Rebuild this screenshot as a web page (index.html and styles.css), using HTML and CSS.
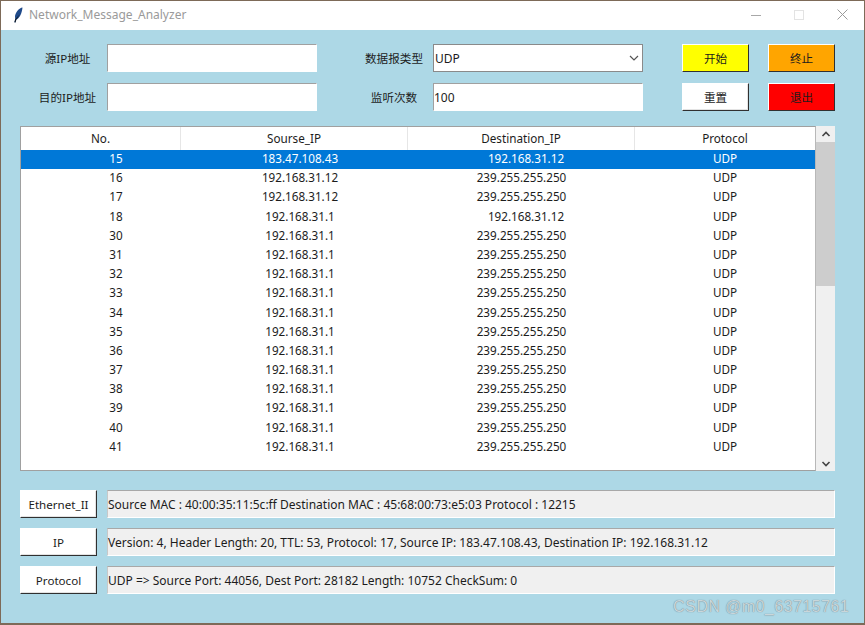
FILE: index.html
```html
<!DOCTYPE html>
<html lang="zh">
<head>
<meta charset="utf-8">
<title>Network_Message_Analyzer</title>
<link rel="stylesheet" href="styles.css">
</head>
<body>
<div class="window">
  <header class="titlebar">
    <svg class="feather" width="14" height="16" viewBox="0 0 14 16"><path d="M10.5 0.5C7 1 4.2 4.5 3 9L3.2 12.3L2.4 15.2L3.4 15.5L4.4 12.6C7.5 11.5 10 6 10.5 0.5Z" fill="#1f4a8a"/><path d="M3.2 12.3L2.4 15.2L3.4 15.5L4.4 12.6L8 7Z" fill="#101820"/></svg>
    <span class="title">Network_Message_Analyzer</span>
    <div class="winctl">
      <svg width="10" height="10" viewBox="0 0 10 10"><path d="M0 5.5H10" stroke="#a8a8a8" fill="none"/></svg>
      <svg width="10" height="10" viewBox="0 0 10 10"><rect x=".5" y=".5" width="9" height="9" stroke="#e3e3e3" fill="none"/></svg>
      <svg width="11" height="11" viewBox="0 0 11 11"><path d="M.5.5L10.5 10.5M10.5.5L.5 10.5" stroke="#9a9a9a" fill="none"/></svg>
    </div>
  </header>
  <main class="content">
    <section class="form">
      <label class="lbl">源IP地址</label>
      <div class="entry"></div>
      <label class="lbl lbl-r">数据报类型</label>
      <div class="combo"><span>UDP</span><svg width="10" height="6" viewBox="0 0 10 6"><path d="M1 1L5 5L9 1" stroke="#555" stroke-width="1.2" fill="none"/></svg></div>
      <button class="btn yellow">开始</button>
      <button class="btn orange">终止</button>
      <label class="lbl">目的IP地址</label>
      <div class="entry"></div>
      <label class="lbl lbl-r">监听次数</label>
      <div class="entry entry-text">100</div>
      <button class="btn">重置</button>
      <button class="btn red">退出</button>
    </section>

    <section class="table-wrap">
      <div class="table">
        <div class="row head"><div>No.</div><div>Sourse_IP</div><div>Destination_IP</div><div>Protocol</div></div>
        <div class="row selected"><div class="no">15</div><div class="src">183.47.108.43</div><div class="short">192.168.31.12</div><div>UDP</div></div>
        <div class="row"><div class="no">16</div><div class="src">192.168.31.12</div><div>239.255.255.250</div><div>UDP</div></div>
        <div class="row"><div class="no">17</div><div class="src">192.168.31.12</div><div>239.255.255.250</div><div>UDP</div></div>
        <div class="row"><div class="no">18</div><div class="src">192.168.31.1</div><div class="short">192.168.31.12</div><div>UDP</div></div>
        <div class="row"><div class="no">30</div><div class="src">192.168.31.1</div><div>239.255.255.250</div><div>UDP</div></div>
        <div class="row"><div class="no">31</div><div class="src">192.168.31.1</div><div>239.255.255.250</div><div>UDP</div></div>
        <div class="row"><div class="no">32</div><div class="src">192.168.31.1</div><div>239.255.255.250</div><div>UDP</div></div>
        <div class="row"><div class="no">33</div><div class="src">192.168.31.1</div><div>239.255.255.250</div><div>UDP</div></div>
        <div class="row"><div class="no">34</div><div class="src">192.168.31.1</div><div>239.255.255.250</div><div>UDP</div></div>
        <div class="row"><div class="no">35</div><div class="src">192.168.31.1</div><div>239.255.255.250</div><div>UDP</div></div>
        <div class="row"><div class="no">36</div><div class="src">192.168.31.1</div><div>239.255.255.250</div><div>UDP</div></div>
        <div class="row"><div class="no">37</div><div class="src">192.168.31.1</div><div>239.255.255.250</div><div>UDP</div></div>
        <div class="row"><div class="no">38</div><div class="src">192.168.31.1</div><div>239.255.255.250</div><div>UDP</div></div>
        <div class="row"><div class="no">39</div><div class="src">192.168.31.1</div><div>239.255.255.250</div><div>UDP</div></div>
        <div class="row"><div class="no">40</div><div class="src">192.168.31.1</div><div>239.255.255.250</div><div>UDP</div></div>
        <div class="row"><div class="no">41</div><div class="src">192.168.31.1</div><div>239.255.255.250</div><div>UDP</div></div>
      </div>
      <div class="scrollbar">
        <svg width="10" height="6" viewBox="0 0 10 6"><path d="M1.5 5L5 1.5L8.5 5" stroke="#444" stroke-width="1.6" fill="none"/></svg>
        <div class="track"><div class="thumb"></div></div>
        <svg width="10" height="6" viewBox="0 0 10 6"><path d="M1.5 1L5 4.5L8.5 1" stroke="#444" stroke-width="1.6" fill="none"/></svg>
      </div>
    </section>

    <section class="details">
      <button class="btn">Ethernet_II</button>
      <div class="field">Source MAC : 40:00:35:11:5c:ff Destination MAC : 45:68:00:73:e5:03 Protocol : 12215</div>
      <button class="btn">IP</button>
      <div class="field">Version: 4, Header Length: 20, TTL: 53, Protocol: 17, Source IP: 183.47.108.43, Destination IP: 192.168.31.12</div>
      <button class="btn">Protocol</button>
      <div class="field">UDP =&gt; Source Port: 44056, Dest Port: 28182 Length: 10752 CheckSum: 0</div>
    </section>
    <div class="watermark">CSDN @m0_63715761</div>
  </main>
</div>
</body>
</html>
```
FILE: styles.css
```css
* { box-sizing: border-box; }
html, body { margin: 0; height: 100%; }
body {
  background: #7d6a58;
  font-family: "Noto Sans", "Noto Sans CJK SC", sans-serif;
  font-size: 12px;
  color: #1c1c1c;
  padding: 1px 1px 2px 1px;
}
.window { height: 622px; display: flex; flex-direction: column; background: #add8e6; }
.titlebar {
  height: 29px;
  flex: none;
  background: #fff;
  display: flex;
  align-items: center;
  padding: 0 0 2px 11px;
}
.feather { flex: none; }
.title { margin-left: 3px; color: #9a9a9a; font-size: 12px; }
.winctl { margin-left: auto; display: flex; align-items: center; gap: 33px; padding-right: 16px; }
.content { position: relative; flex: 1; padding: 14px 29px 0 19px; }
.form {
  display: grid;
  grid-template-columns: 87px 210px 116px 210px 106px 86px;
  grid-template-rows: 28px 28px;
  row-gap: 11px;
  align-items: stretch;
}
.lbl { display: flex; align-items: center; justify-content: center; padding-left: 8px; font-size: 11.6px; }
.lbl-r { padding-left: 38px; }
.entry, .combo {
  background: #fff;
  border: 1px solid #fff;
  border-top: 1px solid #a0a0a0;
  border-left: 1px solid #a0a0a0;
}
.entry-text { display: flex; align-items: center; padding-left: 0; }
.combo {
  display: flex;
  align-items: center;
  justify-content: space-between;
  padding: 0 3px 0 1px;
  border: 1px solid #8a8a8a;
}
.btn {
  font: inherit;
  font-size: 11.6px;
  color: #1c1c1c;
  background: #fff;
  border: 1px solid #fff;
  border-right-color: #303030;
  border-bottom-color: #303030;
  padding: 0;
  box-shadow: inset -1px -1px 0 #e3e3e3;
}
.form .btn:nth-of-type(odd) { margin-left: 39px; width: 67px; }
.form .btn:nth-of-type(even) { margin-left: 19px; width: 67px; }
.yellow { background: #ffff00; box-shadow: none; }
.orange { background: #ffa500; box-shadow: none; }
.red { background: #ff0000; box-shadow: none; }
.table-wrap { margin-top: 15px; display: flex; height: 345px; }
.table {
  width: 796px;
  background: #fff;
  border: 1px solid #a0a0a0;
  border-right-color: #b8b8b8;
  font-size: 11.7px;
}
.row {
  display: grid;
  grid-template-columns: 160px 227px 227px 180px;
  height: 19.2px;
  line-height: 17.6px;
  text-align: center;
}
.row.head { height: 23px; line-height: 23px; }
.row.head > div { border-right: 1px solid #e6e6e6; }
.row.head > div:last-child { border-right: 0; }
.row.selected { background: #0078d7; color: #fff; }
.no { padding-left: 30px; }
.src { padding-left: 11px; }
.short { padding-left: 9px; }
.scrollbar {
  width: 19px;
  background: #f0f0f0;
  display: flex;
  flex-direction: column;
  align-items: center;
  padding: 5px 0 4px;
}
.track { flex: 1; width: 100%; margin: 5px 0; }
.thumb { height: 144px; background: #cdcdcd; }
.details {
  margin-top: 19px;
  display: grid;
  grid-template-columns: 77px 728px;
  grid-auto-rows: 28px;
  column-gap: 10px;
  row-gap: 10px;
}
.field {
  background: #f0f0f0;
  border-top: 1px solid #a8a8a8;
  border-left: 1px solid #c8c8c8;
  border-bottom: 1px solid #fff;
  border-right: 1px solid #fff;
  display: flex;
  align-items: center;
  padding-left: 0;
  white-space: nowrap;
}
.watermark {
  position: absolute;
  right: 15px;
  bottom: 7px;
  font-family: "Liberation Sans", sans-serif;
  font-size: 16px;
  color: #c9d6db;
  letter-spacing: .45px;
  text-shadow: 0 0 1px #5f6e75;
}
```
